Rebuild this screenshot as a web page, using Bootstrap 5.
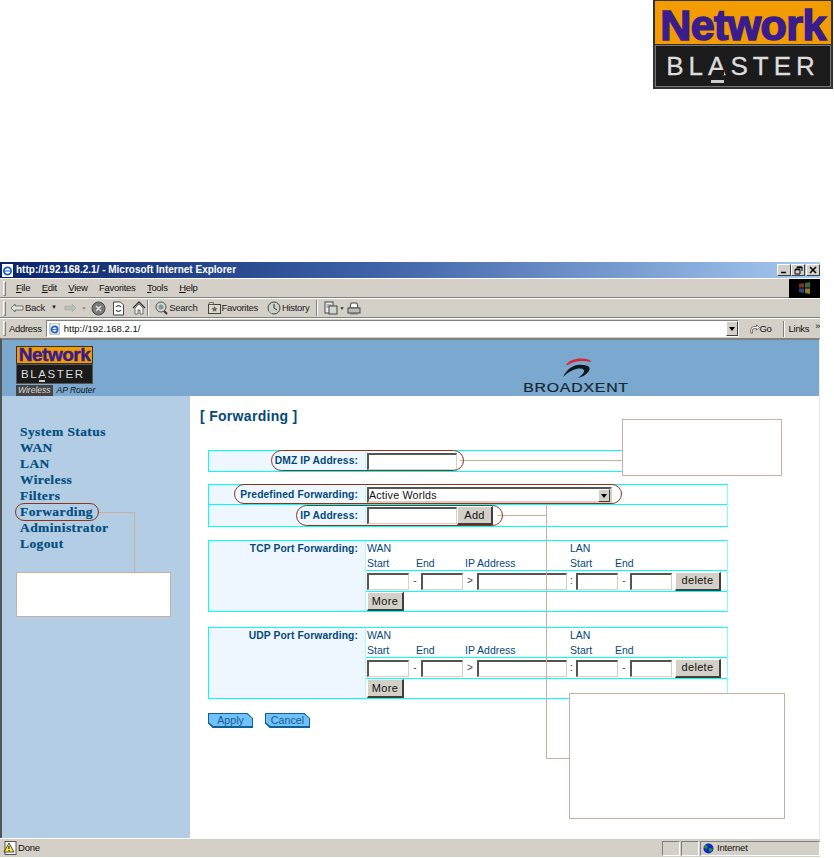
<!DOCTYPE html>
<html lang="en"><head><meta charset="utf-8"><title>Forwarding</title>
<link href="https://cdn.jsdelivr.net/npm/bootstrap@5.3.0/dist/css/bootstrap.min.css" rel="stylesheet">
<style>
html,body{margin:0;background:#fff}
body{font-family:"Liberation Sans",Arial,sans-serif;font-size:10px;line-height:1.2;color:#000}
.sheet{position:relative;width:834px;height:858px;overflow:hidden}
.top-band{height:262px}
.brand{width:180px;height:89px;background:#333;padding:1px 2px 2px 2px;margin-right:1px}
.brand-up{height:43px;background:#f39c00;color:#3a1d8c;font-weight:700;font-size:43px;letter-spacing:-.6px;line-height:48px;-webkit-text-stroke:1.6px #3a1d8c;white-space:nowrap}
.brand-dn{height:42px;margin-top:1px;background:#1c1b1b;border:1px solid #777;color:#ddd;font-size:26px;letter-spacing:5px;line-height:40px;white-space:nowrap;-webkit-text-stroke:.3px #ddd}
.apeak{position:relative;display:inline-block}
.apeak::after{content:"";position:absolute;left:28%;right:28%;top:60%;height:13%;background:#1c1b1b}
.apeak::before{content:"";position:absolute;left:12%;right:28%;bottom:8%;height:6%;background:#ccc}
.winbox{width:820px;height:595px;background:#d4d0c8}
.titlebar{height:16px;background:linear-gradient(90deg,#0a246a 0,#3d60a6 45%,#a6caf0 100%);color:#fff;font-weight:700;font-size:10px;padding-left:2px}
.ctl{width:14px;height:12px;background:#d4d0c8;border:1px solid;border-color:#fff #404040 #404040 #fff;display:flex;align-items:center;justify-content:center}
.menubar{height:20px;border-top:1px solid #fff;border-bottom:1px solid #808080;font-size:9.5px;letter-spacing:-.3px;color:#111}
.grip{height:15px;border:1px solid;border-color:#fff #808080 #808080 #fff;width:3px;margin:0 10px 0 3px;flex:none}
.menubar span.mi{margin-right:11.5px}
.flagbox{width:31px;height:19px;background:#000;margin-left:auto}
.toolbar{height:20px;border-top:1px solid #fff;border-bottom:1px solid #808080;font-size:9.5px;letter-spacing:-.3px;color:#222}
.sep{width:2px;height:16px;border-left:1px solid #808080;border-right:1px solid #fff;flex:none}
.addrbar{height:20px;border-top:1px solid #fff;font-size:9.5px;letter-spacing:-.3px;color:#111}
.addrfield{width:693px;height:17px;flex:none;background:#fff;border:1px solid;border-color:#808080 #fff #fff #808080;margin-left:4px;letter-spacing:0}
.dropb{width:12px;height:15px;background:#d4d0c8;border:1px solid;border-color:#fff #404040 #404040 #fff;margin-left:auto;flex:none}
.dropb i{display:block;width:0;height:0;margin:5px auto 0;border:3.5px solid transparent;border-top:4px solid #000;border-bottom:0}
.pane{height:500px;background:#fff;border-left:2px solid #555;border-top:2px solid #808080;border-right:1px solid #e8e8e8}
.bannerband{height:56px;background:#7ba8cf;padding:6px 0 0 14px}
.minilogo{width:77px}
.minilogo .nu{height:18px;background:#f39c00;border:1px solid #333;color:#3a1d8c;font-weight:700;font-size:19px;letter-spacing:-.5px;line-height:16px;-webkit-text-stroke:.5px #3a1d8c;white-space:nowrap}
.minilogo .nd{height:20px;background:#1c1b1b;border:1px solid #555;color:#ddd;font-size:11.5px;letter-spacing:1.6px;line-height:18px;padding-left:4px;white-space:nowrap}
.minilogo .nw{height:11px;line-height:11px;margin-top:1px;white-space:nowrap;color:#111;font-style:italic;font-size:8.5px}
.minilogo .nw b{display:inline-block;background:#444;color:#ddd;padding:0 2px;margin-right:4px;font-weight:400}
.broad{position:absolute;left:515px;top:356px;width:122px;text-align:center;color:#14262f}
.broad div{font-size:12px;-webkit-text-stroke:.2px #14262f;letter-spacing:.6px;line-height:12px;margin-top:2px;transform:scaleX(1.32);white-space:nowrap}
.bodysplit{height:442px}
.sidepane{width:188px;background:#b3cde5;padding:28px 0 0 18px;flex:none}
.sidepane a{display:block;font-family:"Liberation Serif","Times New Roman",serif;font-weight:700;font-size:13.5px;letter-spacing:.4px;line-height:16px;color:#034e7e;text-decoration:none;-webkit-text-stroke:.2px #034e7e}
.mainpane{padding:12px 0 0 10px}
.pgtitle{font-size:14px;font-weight:700;color:#05497a;letter-spacing:.3px;line-height:16px;margin:0 0 26px}
.fmt{margin-left:8px;width:520px;border:1px solid #00ffff;border-right-color:#80ffff}
.frow{display:flex}
.frow+.frow{border-top:1px solid #00ffff}
.flab{width:157px;flex:none;background:#eef7ff;border-right:1px solid #b8f4f4;text-align:right;font-weight:700;font-size:10.3px;letter-spacing:.1px;color:#05497a;padding:0 7px 0 0;line-height:20px}
.fval{flex:1;padding:0 0 0 1px;display:flex;align-items:center;color:#05497a}
.inbox{background:#fff;height:17px;border:1px solid;border-width:2px 1px 1px 2px;border-color:#555 #d4d0c8 #d4d0c8 #555;flex:none}
.pushb{background:#d4d0c8;border:1px solid;border-width:1px 2px 2px 1px;border-color:#fff #404040 #404040 #fff;height:19px;font-size:11px;line-height:15px;color:#111;padding:0;text-align:center;letter-spacing:.3px;flex:none}
.selbox{width:245px;height:16px;background:#fff;border:2px solid;border-color:#555 #d4d0c8 #d4d0c8 #555;font-size:10.7px;color:#111;line-height:13px;display:flex;letter-spacing:.2px}
.hdrgrid{display:grid;grid-template-columns:49px 49px 105px 45px 60px;font-size:10.5px;line-height:15px;color:#05497a;padding-left:1px;height:29px}
.hdrgrid span{white-space:nowrap}
.ports{flex-direction:column;flex:1;min-width:0}
.ports>div+div{border-top:1px solid #00ffff}
.pline{display:flex;align-items:center;height:21px;padding-left:1px;color:#444;font-size:10px}
.pline .d{width:12px;text-align:center;flex:none}
.mline{height:20px;padding:0 0 0 1px}
.portlabel{line-height:14px;padding-top:1px}
.ablue{display:inline-block;position:relative;width:45px;height:15px;background:#12608f;clip-path:polygon(0 0,88% 0,100% 35%,100% 100%,10% 100%,0 70%);color:#1a5b86;font-size:10.7px;line-height:13px;text-align:center;border:0;padding:0}
.ablue::before{content:"";position:absolute;inset:1px 1px 2px 1px;background:#70c2ff;clip-path:polygon(0 0,88% 0,100% 35%,100% 100%,10% 100%,0 70%)}
.ablue span{position:relative}
.statusb{height:19px;border-top:1px solid #fff;background:#d4d0c8;font-size:9.5px;letter-spacing:-.2px;color:#111}
.cellb{height:15px;border:1px solid;border-color:#808080 #fff #fff #808080;flex:none}
.note{position:absolute;background:#fff;border:1px solid #cbaea0}
.wire{position:absolute;background:#cbaea0}
.ring{position:absolute;border:1px solid #8a3517;border-radius:11px}
</style></head>
<body>
<div class="sheet">
  <div class="top-band d-flex justify-content-end">
    <div class="brand">
      <div class="brand-up text-center">Network</div>
      <div class="brand-dn text-center">BL<span class="apeak">A</span>STER</div>
    </div>
  </div>
  <div class="winbox">
    <div class="titlebar d-flex align-items-center">
      <svg width="12" height="13" viewBox="0 0 12 13" class="flex-none" style="margin-right:2px"><rect x="0" y="0" width="11" height="13" fill="#fff"/><circle cx="5.500" cy="7" r="3.600" fill="none" stroke="#1a5fc8" stroke-width="1.800"/><path d="M2 7h7" stroke="#1a5fc8"/></svg>
      <span>http://192.168.2.1/ - Microsoft Internet Explorer</span>
      <div class="ms-auto d-flex">
        <div class="ctl"><svg width="8" height="8" viewBox="0 0 8 8"><path d="M1 6.500h5" stroke="#000" stroke-width="1.500"/></svg></div>
        <div class="ctl"><svg width="9" height="9" viewBox="0 0 9 9"><path d="M3 1h5v4M3 1v1.500M1 3.500h5v4.500H1z" fill="none" stroke="#000"/><path d="M1 3.500h5M3 1.500h5" stroke="#000" stroke-width="1.500"/></svg></div>
        <div class="ctl" style="margin-left:1px"><svg width="8" height="8" viewBox="0 0 8 8"><path d="M1 1l6 6M7 1L1 7" stroke="#000" stroke-width="1.500"/></svg></div>
      </div>
    </div>
    <div class="menubar d-flex align-items-center">
      <div class="grip"></div>
      <span class="mi"><u>F</u>ile</span><span class="mi"><u>E</u>dit</span><span class="mi"><u>V</u>iew</span><span class="mi">F<u>a</u>vorites</span><span class="mi"><u>T</u>ools</span><span class="mi"><u>H</u>elp</span>
      <div class="flagbox d-flex align-items-center justify-content-center">
        <svg width="14" height="14" viewBox="0 0 14 14"><path d="M1 3l5-1v4.500H1z" fill="#7e3128"/><path d="M7 2l5-1v5.500H7z" fill="#3a6a37"/><path d="M1 7.500h5V12l-5-1z" fill="#2c477c"/><path d="M7 7.500h5V13l-5-1z" fill="#8e7a2e"/></svg>
      </div>
    </div>
    <div class="toolbar d-flex align-items-center">
      <div class="grip" style="margin-right:5px"></div>
      <svg width="13" height="10" viewBox="0 0 13 10" class="flex-none"><path d="M0 5l4-4v2h8v4H4v2z" fill="#dbe6d8" stroke="#333" stroke-width=".6"/></svg>
      <span style="margin:0 6px 0 1px">Back</span>
      <span style="font-size:6px;margin-right:7px">&#9660;</span>
      <svg width="12" height="10" viewBox="0 0 13 10" class="flex-none"><path d="M13 5L9 1v2H1v4h8v2z" fill="#b9c2b9" stroke="#999" stroke-width=".6"/></svg>
      <span style="font-size:5px;color:#888;margin:0 5px 0 6px">&#9660;</span>
      <svg width="15" height="15" viewBox="0 0 15 15" class="flex-none"><circle cx="7.500" cy="7.500" r="6.500" fill="#7a7a7a" stroke="#444"/><path d="M5 5l5 5M10 5l-5 5" stroke="#ddd" stroke-width="1.500"/></svg>
      <svg width="13" height="15" viewBox="0 0 13 15" class="flex-none" style="margin-left:6px"><path d="M1.500 1h7l3 3v10h-10z" fill="#fff" stroke="#444"/><path d="M4 6a3 3 0 0 1 5 0M9 9a3 3 0 0 1-5 0" fill="none" stroke="#444" stroke-width="1.200"/></svg>
      <svg width="14" height="14" viewBox="0 0 14 14" class="flex-none" style="margin-left:7px"><path d="M1 7l6-6 6 6" fill="none" stroke="#333" stroke-width="1.300"/><path d="M3 7v6h3V9h2v4h3V7L7 3z" fill="#f4f2ea" stroke="#444" stroke-width=".7"/></svg>
      <div class="sep" style="margin:0 6px 0 1px"></div>
      <svg width="13" height="14" viewBox="0 0 13 14" class="flex-none"><circle cx="6" cy="6" r="5" fill="#cfd8d0" stroke="#555"/><circle cx="6" cy="6" r="2.500" fill="#7f9a9a"/><path d="M9 10l3 3" stroke="#333" stroke-width="2"/></svg>
      <span style="margin:0 10px 0 1px">Search</span>
      <svg width="13" height="12" viewBox="0 0 13 12" class="flex-none"><rect x=".5" y="2.500" width="12" height="9" fill="#ddd8c4" stroke="#444"/><path d="M.5 2.500h5V.5h-4z" fill="#ddd8c4" stroke="#444" stroke-width=".7"/><path d="M6.500 4l1 2 2 .3-1.500 1.400.4 2-1.900-1-1.900 1 .4-2L3.500 6.300l2-.3z" fill="#666"/></svg>
      <span style="margin:0 9px 0 1px">Favorites</span>
      <svg width="14" height="14" viewBox="0 0 14 14" class="flex-none"><circle cx="7" cy="7" r="6" fill="#c8d2c8" stroke="#444"/><path d="M7 3v4l3 2" fill="none" stroke="#333"/><path d="M1 4l3-3M2 10l3 3" stroke="#8aa"/></svg>
      <span style="margin:0 7px 0 1px">History</span>
      <div class="sep" style="margin:0 6px 0 0"></div>
      <svg width="14" height="14" viewBox="0 0 14 14" class="flex-none"><rect x="1" y="1" width="8" height="11" fill="#eee" stroke="#444"/><rect x="5" y="5" width="8" height="8" fill="#cfd8cf" stroke="#444"/><path d="M2.500 4h5M2.500 6h2" stroke="#444" stroke-width=".7"/></svg>
      <span style="font-size:5px;margin:0 3px 0 1px">&#9660;</span>
      <svg width="14" height="13" viewBox="0 0 14 13" class="flex-none"><path d="M4 1h6l1 5H3z" fill="#fff" stroke="#444"/><rect x="1" y="6" width="12" height="5" fill="#bdbdb6" stroke="#444"/><path d="M3 11h8v1.500H3z" fill="#777"/></svg>
    </div>
    <div class="addrbar d-flex align-items-center">
      <div class="grip" style="margin-right:3px"></div>
      <span>Address</span>
      <div class="addrfield d-flex align-items-center">
        <svg width="12" height="12" viewBox="0 0 13 13" class="flex-none" style="margin:0 3px 0 2px"><rect x="1" y="0" width="10" height="12" fill="#f4f4f4" stroke="#777" stroke-width=".7"/><circle cx="6" cy="7" r="3.300" fill="none" stroke="#1a5fc8" stroke-width="1.800"/><path d="M2.500 7h7" stroke="#1a5fc8"/></svg>
        <span>http://192.168.2.1/</span>
        <div class="dropb"><i></i></div>
      </div>
      <svg width="12" height="12" viewBox="0 0 12 12" class="flex-none" style="margin-left:11px"><path d="M1 11V7a4 4 0 0 1 4-4h3V1l3.500 3L8 7.500V5.500H5A2 2 0 0 0 3 7.500V11z" fill="#fff" stroke="#333" stroke-width=".8"/></svg>
      <span>Go</span>
      <div class="sep" style="margin:0 4px 0 11px"></div>
      <span>Links</span>
      <span style="margin:-4px 0 0 6px;font-size:9px">&raquo;</span>
    </div>
    <div class="pane">
      <div class="bannerband">
        <div class="minilogo">
          <div class="nu text-center">Network</div>
          <div class="nd">BL<span class="apeak">A</span>STER</div>
          <div class="nw"><b>Wireless</b>AP Router</div>
        </div>
      </div>
      <div class="bodysplit d-flex">
        <nav class="sidepane">
          <a href="#">System Status</a><a href="#">WAN</a><a href="#">LAN</a><a href="#">Wireless</a><a href="#">Filters</a><a href="#">Forwarding</a><a href="#">Administrator</a><a href="#">Logout</a>
        </nav>
        <main class="mainpane flex-grow-1">
          <h1 class="pgtitle">[ Forwarding ]</h1>
          <div class="fmt" style="margin-bottom:12px">
            <div class="frow"><div class="flab">DMZ IP Address:</div><div class="fval"><div class="inbox" style="width:90px"></div></div></div>
          </div>
          <div class="fmt" style="margin-bottom:13px">
            <div class="frow"><div class="flab" style="line-height:19px">Predefined Forwarding:</div><div class="fval"><div class="selbox"><span>Active Worlds</span><div class="dropb" style="height:13px"><i style="margin-top:4px"></i></div></div></div></div>
            <div class="frow"><div class="flab" style="line-height:21px">IP Address:</div><div class="fval"><div class="inbox" style="width:90px"></div><button class="pushb" style="width:36px" type="button">Add</button></div></div>
          </div>
          <div class="fmt" style="margin-bottom:15px">
            <div class="frow"><div class="flab portlabel">TCP Port Forwarding:</div>
              <div class="ports d-flex">
                <div class="hdrgrid"><span style="grid-column:1/4">WAN</span><span style="grid-column:4/6">LAN</span><span>Start</span><span>End</span><span>IP Address</span><span>Start</span><span>End</span></div>
                <div class="pline"><div class="inbox" style="width:42px"></div><span class="d">-</span><div class="inbox" style="width:42px"></div><span class="d" style="width:14px">&gt;</span><div class="inbox" style="width:90px"></div><span class="d" style="width:9px">:</span><div class="inbox" style="width:42px"></div><span class="d">-</span><div class="inbox" style="width:42px"></div><button class="pushb" style="width:46px;margin-left:3px" type="button">delete</button></div>
                <div class="mline"><button class="pushb" style="width:37px" type="button">More</button></div>
              </div>
            </div>
          </div>
          <div class="fmt" style="margin-bottom:14px">
            <div class="frow"><div class="flab portlabel">UDP Port Forwarding:</div>
              <div class="ports d-flex">
                <div class="hdrgrid"><span style="grid-column:1/4">WAN</span><span style="grid-column:4/6">LAN</span><span>Start</span><span>End</span><span>IP Address</span><span>Start</span><span>End</span></div>
                <div class="pline"><div class="inbox" style="width:42px"></div><span class="d">-</span><div class="inbox" style="width:42px"></div><span class="d" style="width:14px">&gt;</span><div class="inbox" style="width:90px"></div><span class="d" style="width:9px">:</span><div class="inbox" style="width:42px"></div><span class="d">-</span><div class="inbox" style="width:42px"></div><button class="pushb" style="width:46px;margin-left:3px" type="button">delete</button></div>
                <div class="mline"><button class="pushb" style="width:37px" type="button">More</button></div>
              </div>
            </div>
          </div>
          <div class="d-flex" style="margin-left:8px;gap:12px"><button class="ablue" type="button"><span>Apply</span></button><button class="ablue" type="button"><span>Cancel</span></button></div>
        </main>
      </div>
    </div>
    <div class="statusb d-flex align-items-center">
      <svg width="14" height="14" viewBox="0 0 14 14" class="flex-none" style="margin-left:3px"><rect x="2" y="0.500" width="11" height="13" fill="#fff" stroke="#555"/><path d="M6 2L1 11h10z" fill="#ffe34d" stroke="#222" stroke-width=".8"/><path d="M6 5v3M6 9v1.200" stroke="#000"/></svg>
      <span style="margin-left:1px">Done</span>
      <div class="cellb ms-auto" style="width:18px"></div>
      <div class="cellb" style="width:18px;margin-left:1px"></div>
      <div class="cellb d-flex align-items-center" style="width:120px;margin-left:1px">
        <svg width="11" height="11" viewBox="0 0 11 11" class="flex-none" style="margin:0 3px 0 2px"><circle cx="5.500" cy="5.500" r="5" fill="#1428c8"/><path d="M2 2l3 1-1 3-3-1zM6 5l4 1-2 3-2-1z" fill="#1f9a2c"/></svg>
        <span>Internet</span>
      </div>
    </div>
  </div>

  <div class="broad">
    <svg width="122" height="24" viewBox="0 0 122 24" class="d-block"><path d="M51 9C55 3 65 1 75 4L76 6C67 4 59 5 53 9z" fill="#d9243a"/><path d="M48 21C52 13 59 8 67 9 73 9 76 11 74 15 71 19 67 21 63 22 67 19 70 16 69 14 67 11 57 12 48 21z" fill="#10181e"/></svg>
    <div>BROADXENT</div>
  </div>

  <div class="wire" style="left:460px;top:460px;width:162px;height:1px"></div>
  <div class="wire" style="left:498px;top:515px;width:49px;height:1px"></div>
  <div class="wire" style="left:546px;top:504px;width:1px;height:254px"></div>
  <div class="wire" style="left:546px;top:758px;width:24px;height:1px"></div>
  <div class="wire" style="left:98px;top:512px;width:37px;height:1px"></div>
  <div class="wire" style="left:134px;top:512px;width:1px;height:60px"></div>
  <div class="note" style="left:622px;top:419px;width:160px;height:57px"></div>
  <div class="note" style="left:569px;top:693px;width:216px;height:126px"></div>
  <div class="note" style="left:16px;top:572px;width:155px;height:45px"></div>
  <div class="ring" style="left:15px;top:503px;width:84px;height:18px"></div>
  <div class="ring" style="left:271px;top:450px;width:193px;height:21px"></div>
  <div class="ring" style="left:234px;top:484px;width:388px;height:20px"></div>
  <div class="ring" style="left:296px;top:505px;width:207px;height:21px"></div>
</div>
<script src="https://cdn.jsdelivr.net/npm/bootstrap@5.3.0/dist/js/bootstrap.bundle.min.js"></script>
</body></html>
